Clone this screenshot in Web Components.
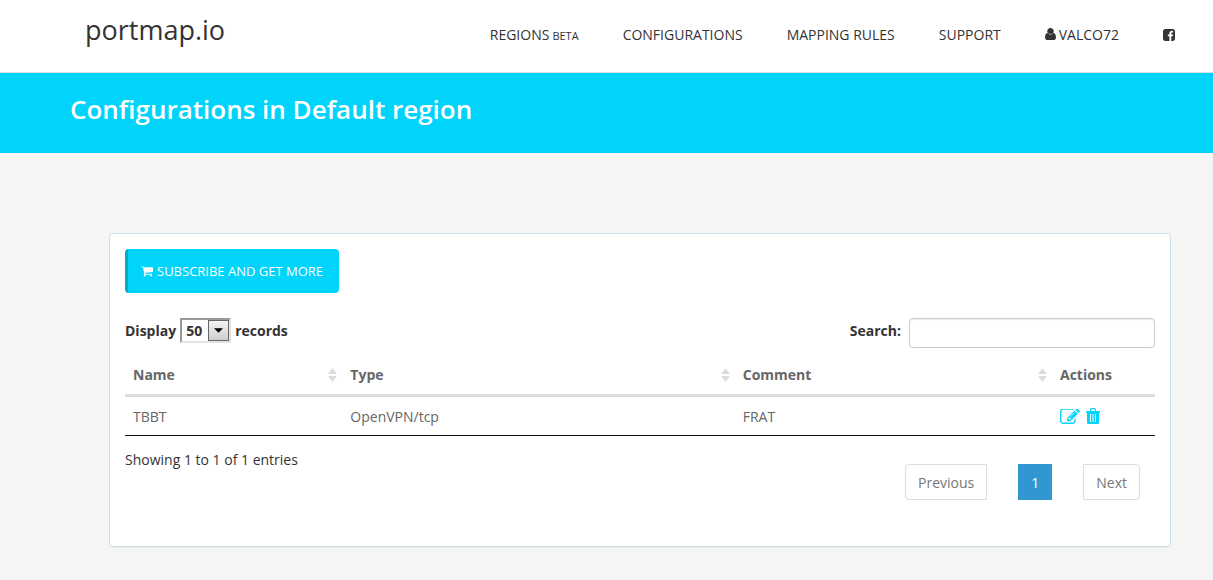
<!DOCTYPE html>
<html lang="en">
<head>
<meta charset="utf-8">
<meta name="viewport" content="width=device-width, initial-scale=1">
<title>Configurations - portmap.io</title>
<style>
  body {
    margin: 0;
    background: #f5f5f5;
    color: #333;
    font: 14px/20px "Open Sans", sans-serif;
    --accent: #00d4fb;
    --line: #ddd;
  }
</style>
</head>
<body>
<pm-header></pm-header>
<pm-banner>Configurations in Default region</pm-banner>
<pm-card>
  <pm-button icon="cart">Subscribe and get more</pm-button>
  <pm-toolbar></pm-toolbar>
  <pm-table></pm-table>
  <pm-footer>Showing 1 to 1 of 1 entries</pm-footer>
</pm-card>

<script>
const ICONS = {
  user: ['0 128 1280 1408', 'M1280 1271q0 109-62.5 187t-150.5 78h-854q-88 0-150.5-78t-62.5-187q0-85 8.5-160.5t31.5-152 58.5-131 94-89 134.5-34.5q131 128 313 128t313-128q76 0 134.5 34.5t94 89 58.5 131 31.5 152 8.5 160.5zM1024 512q0 159-112.5 271.5t-271.5 112.5-271.5-112.5-112.5-271.5 112.5-271.5 271.5-112.5 271.5 112.5 112.5 271.5z'],
  facebook: ['0 128 1536 1536', 'M1248 128q119 0 203.5 84.5t84.5 203.5v960q0 119-84.5 203.5t-203.5 84.5h-188v-595h199l30-232h-229v-148q0-56 23.5-84t91.5-28l122-1v-207q-63-9-178-9-136 0-217.5 80t-81.5 226v171h-200v232h200v595h-532q-119 0-203.5-84.5t-84.5-203.5v-960q0-119 84.5-203.5t203.5-84.5h960z'],
  cart: ['0 256 1664 1408', 'M640 1536q0 52-38 90t-90 38-90-38-38-90 38-90 90-38 90 38 38 90zm896 0q0 52-38 90t-90 38-90-38-38-90 38-90 90-38 90 38 38 90zm128-1088v512q0 24-16.5 42.5t-40.5 21.5l-1044 122q13 60 13 70 0 16-24 64h920q26 0 45 19t19 45-19 45-45 19h-1024q-26 0-45-19t-19-45q0-11 8-31.5t16-36 21.5-40 15.5-29.5l-177-823h-204q-26 0-45-19t-19-45 19-45 45-19h256q16 0 28.5 6.5t19.5 15.5 13 24.5 8 26 5.5 29.5 4.5 26h1201q26 0 45 19t19 45z'],
  edit: ['0 180 1792 1356', 'M888 1184l116-116-152-152-116 116v56h96v96h56zm440-720q-16-16-33 1l-350 350q-17 17-1 33t33-1l350-350q17-17 1-33zm80 594v190q0 119-84.5 203.5t-203.5 84.5h-832q-119 0-203.5-84.5t-84.5-203.5v-832q0-119 84.5-203.5t203.5-84.5h832q63 0 117 25 15 7 18 23 3 17-9 29l-49 49q-14 14-32 8-23-6-45-6h-832q-66 0-113 47t-47 113v832q0 66 47 113t113 47h832q66 0 113-47t47-113v-126q0-13 9-22l64-64q15-15 35-7t20 29zm-96-738l288 288-672 672h-288v-288zm444 132l-92 92-288-288 92-92q28-28 68-28t68 28l152 152q28 28 28 68t-28 68z'],
  trash: ['0 0 14 16', 'M4 3V1.5Q4 0 5.500 0h3Q10 0 10 1.500V3h3.500q.5 0 .5 1t-.5 1H13v9.500q0 1.500-1.500 1.500h-9Q1 16 1 14.500V5H.5Q0 5 0 4t.5-1zM5.200 3h3.600V1.200H5.200zM4 6v8h1V6zM6.500 6v8h1V6zM9 6v8h1V6z'],
  sort: ['0 0 9 14', 'M4.500 0L9 6H0zM0 8h9L4.500 14z'],
  down: ['0 0 10 5', 'M0 0h10L5 5z']
};

function define(name, html) {
  const template = document.createElement('template');
  template.innerHTML = html;
  customElements.define(name, class extends HTMLElement {
    constructor() {
      super();
      this.attachShadow({ mode: 'open' }).append(template.content.cloneNode(true));
    }
  });
}

customElements.define('pm-icon', class extends HTMLElement {
  constructor() {
    super();
    this.attachShadow({ mode: 'open' });
  }
  connectedCallback() {
    const [box, path] = ICONS[this.getAttribute('name')];
    this.shadowRoot.innerHTML = `
      <style>
        :host { display: inline-block; width: 12px; height: 12px; flex: none; }
        svg { display: block; width: 100%; height: 100%; }
      </style>
      <svg viewBox="${box}" fill="currentColor" fill-rule="evenodd" aria-hidden="true"><path d="${path}"/></svg>`;
  }
});

define('pm-header', `
  <style>
    :host { display: block; background: #fff; border-bottom: 1px solid #ddd; }
    header { display: flex; justify-content: space-between; align-items: flex-start; padding: 0 38px 0 85px; height: 72px; }
    a { color: inherit; text-decoration: none; }
    .logo { font-size: 27px; line-height: 60px; }
    nav { display: flex; gap: 44px; padding-top: 25px; text-transform: uppercase; white-space: nowrap; }
    nav a { display: flex; align-items: baseline; gap: 3px; }
    small { font-size: 11px; }
    .user { width: 11px; height: 12px; }
    .social { align-items: center; height: 20px; }
  </style>
  <header>
    <a class="logo" href="#">portmap.io</a>
    <nav>
      <a href="#">Regions <small>beta</small></a>
      <a href="#">Configurations</a>
      <a href="#">Mapping rules</a>
      <a href="#">Support</a>
      <a href="#"><pm-icon class="user" name="user"></pm-icon>valco72</a>
      <a class="social" href="#" aria-label="Facebook"><pm-icon name="facebook"></pm-icon></a>
    </nav>
  </header>`);

define('pm-banner', `
  <style>
    :host { display: block; background: var(--accent); color: #fff; padding: 16px 70px 24px; }
    h1 { margin: 0; font-size: 26px; line-height: 40px; font-weight: 600; }
  </style>
  <h1><slot></slot></h1>`);

define('pm-card', `
  <style>
    :host { display: block; margin: 80px 42px 33px 109px; padding: 15px 15px 46px; background: #fff;
      border: 1px solid #cfdfe9; border-radius: 4px; box-shadow: 0 1px 1px rgba(0,0,0,.05); }
  </style>
  <slot></slot>`);

define('pm-button', `
  <style>
    :host { display: block; }
    button { display: flex; align-items: center; gap: 4px; height: 44px; padding: 0 16px 0 13px;
      border: 0; border-left: 3px solid #06a9c6; border-radius: 4px; background: var(--accent); color: #fff;
      font: 13px/20px "Open Sans", sans-serif; text-transform: uppercase; cursor: pointer; }
    pm-icon { height: 11px; }
  </style>
  <button type="button"><pm-icon name="cart"></pm-icon><span><slot></slot></span></button>`);

define('pm-toolbar', `
  <style>
    :host { display: flex; justify-content: space-between; align-items: flex-start; margin-top: 25px; font-weight: 700; }
    label { display: flex; align-items: center; }
    .length { gap: 4px; height: 25px; }
    .pick { display: grid; grid-template-columns: 29px 22px; align-items: center; }
    select { grid-area: 1 / 1 / 2 / 3; appearance: none; box-sizing: border-box; height: 25px; padding: 0 0 0 4px;
      border: 2px solid; border-color: #999 #e3e3e3 #e3e3e3 #999; border-radius: 0; background: #fff; color: #333;
      font: 700 14px/20px "Open Sans", sans-serif; }
    .arrow { grid-area: 1 / 2; display: grid; place-items: center; box-sizing: border-box; width: 21px; height: 21px; margin-left: -1px;
      border: 1px solid #666; background: linear-gradient(#f3f3f3, #cdcdcd); color: #000; pointer-events: none; z-index: 1; }
    .arrow pm-icon { width: 9px; height: 5px; }
    .search { gap: 8px; align-items: flex-start; line-height: 25px; }
    input { box-sizing: border-box; width: 246px; height: 30px; padding: 5px 10px; border: 1px solid #ccc; border-radius: 4px;
      box-shadow: inset 0 1px 1px rgba(0,0,0,.075); background: #fff; font: 12px/18px "Open Sans", sans-serif; }
  </style>
  <label class="length">Display
    <span class="pick">
      <select><option>10</option><option>25</option><option selected>50</option><option>100</option></select>
      <span class="arrow"><pm-icon name="down"></pm-icon></span>
    </span>
    records</label>
  <label class="search">Search: <input type="search"></label>`);

define('pm-table', `
  <style>
    :host { display: block; margin-top: 7px; color: #666; }
    table { width: 100%; table-layout: fixed; border-collapse: separate; border-spacing: 0; }
    th, td { box-sizing: border-box; padding: 10px 5px 9px 8px; text-align: left; line-height: 20px; vertical-align: top; }
    th { border-bottom: 3px solid var(--line); font-weight: 700; }
    td { padding-bottom: 8px; border-bottom: 1px solid #111; }
    .head { display: flex; justify-content: space-between; align-items: center; }
    .head pm-icon { width: 9px; height: 14px; color: #dcdcdc; }
    .actions { display: flex; gap: 6px; height: 18px; align-items: center; }
    .actions a { display: flex; color: var(--accent); }
    .edit { width: 20px; height: 15px; }
    .trash { width: 14px; height: 16px; }
  </style>
  <table>
    <colgroup><col style="width:21.1%"><col style="width:38.1%"><col style="width:30.8%"><col style="width:10%"></colgroup>
    <thead><tr>
      <th scope="col"><div class="head">Name <pm-icon name="sort"></pm-icon></div></th>
      <th scope="col"><div class="head">Type <pm-icon name="sort"></pm-icon></div></th>
      <th scope="col"><div class="head">Comment <pm-icon name="sort"></pm-icon></div></th>
      <th scope="col">Actions</th>
    </tr></thead>
    <tbody><tr>
      <td>TBBT</td><td>OpenVPN/tcp</td><td>FRAT</td>
      <td><div class="actions">
        <a href="#" aria-label="Edit"><pm-icon class="edit" name="edit"></pm-icon></a>
        <a href="#" aria-label="Delete"><pm-icon class="trash" name="trash"></pm-icon></a>
      </div></td>
    </tr></tbody>
  </table>`);

define('pm-footer', `
  <style>
    :host { display: flex; justify-content: space-between; align-items: flex-start; padding: 14px 15px 0 0; }
    nav { display: flex; gap: 31px; margin-top: 14px; }
    a { box-sizing: border-box; height: 36px; padding: 8px 12px 6px; border: 1px solid var(--line); color: #777; text-decoration: none; }
    a:first-child { border-radius: 4px 0 0 4px; }
    a:last-child { border-radius: 0 4px 4px 0; }
    a[aria-current] { background: #3097d1; border-color: #3097d1; color: #fff; }
  </style>
  <span><slot></slot></span>
  <nav aria-label="Pages"><a href="#">Previous</a><a href="#" aria-current="page">1</a><a href="#">Next</a></nav>`);
</script>
</body>
</html>
